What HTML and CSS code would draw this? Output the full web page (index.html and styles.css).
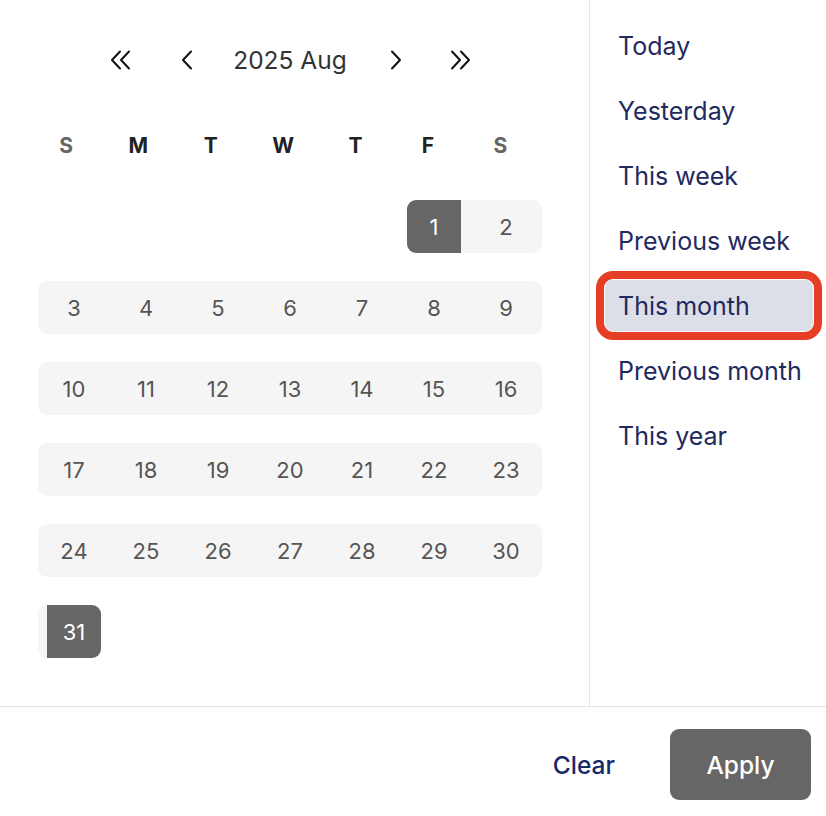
FILE: index.html
```html
<!DOCTYPE html>
<html>
<head>
<meta charset="utf-8">
<link rel="stylesheet" href="styles.css">
</head>
<body>
<div class="picker">
  <div class="main">
    <div class="cal">
      <div class="nav">
        <span class="icon dbl prev2"><svg width="22" height="20" viewBox="0 0 22 20"><polyline points="10,1.5 2,10 10,18.5" /><polyline points="19,1.5 11,10 19,18.5" /></svg></span>
        <span class="icon prev"><svg width="12" height="20" viewBox="0 0 12 20"><polyline points="10,1.5 2,10 10,18.5" /></svg></span>
        <span class="title">2025 Aug</span>
        <span class="icon next"><svg width="12" height="20" viewBox="0 0 12 20"><polyline points="2,1.5 10,10 2,18.5" /></svg></span>
        <span class="icon dbl next2"><svg width="22" height="20" viewBox="0 0 22 20"><polyline points="3,1.5 11,10 3,18.5" /><polyline points="12,1.5 20,10 12,18.5" /></svg></span>
      </div>
      <div class="week head">
        <span class="wd we">S</span><span class="wd">M</span><span class="wd">T</span><span class="wd">W</span><span class="wd">T</span><span class="wd">F</span><span class="wd we">S</span>
      </div>
      <div class="week">
        <span class="day"></span><span class="day"></span><span class="day"></span><span class="day"></span><span class="day"></span>
        <span class="day start"><b>1</b></span><span class="day in last">2</span>
      </div>
      <div class="week">
        <span class="day in first">3</span><span class="day in">4</span><span class="day in">5</span><span class="day in">6</span><span class="day in">7</span><span class="day in">8</span><span class="day in last">9</span>
      </div>
      <div class="week">
        <span class="day in first">10</span><span class="day in">11</span><span class="day in">12</span><span class="day in">13</span><span class="day in">14</span><span class="day in">15</span><span class="day in last">16</span>
      </div>
      <div class="week">
        <span class="day in first">17</span><span class="day in">18</span><span class="day in">19</span><span class="day in">20</span><span class="day in">21</span><span class="day in">22</span><span class="day in last">23</span>
      </div>
      <div class="week">
        <span class="day in first">24</span><span class="day in">25</span><span class="day in">26</span><span class="day in">27</span><span class="day in">28</span><span class="day in">29</span><span class="day in last">30</span>
      </div>
      <div class="week">
        <span class="day end"><b>31</b></span>
      </div>
    </div>
    <ul class="presets">
      <li>Today</li>
      <li>Yesterday</li>
      <li>This week</li>
      <li>Previous week</li>
      <li class="active">This month</li>
      <li>Previous month</li>
      <li>This year</li>
    </ul>
  </div>
  <div class="footer">
    <button class="clear">Clear</button>
    <button class="apply">Apply</button>
  </div>
</div>
</body>
</html>
```
FILE: styles.css
```css
* { box-sizing: border-box; }
html, body { margin: 0; padding: 0; background: #fff; }
body { font-family: Inter, "Noto Sans", sans-serif; width: 826px; height: 816px; overflow: hidden; }

.picker { display: flex; flex-direction: column; height: 816px; }
.main { display: flex; height: 707px; border-bottom: 1px solid #e4e4e7; }

.cal { width: 590px; border-right: 1px solid #e4e4e7; padding: 36px 0 0 38px; }

.nav { width: 504px; display: flex; align-items: center; height: 48px; padding-left: 72px; }
.icon { display: flex; align-items: center; justify-content: center; }
.icon svg { fill: none; stroke: #111; stroke-width: 2; stroke-linecap: round; stroke-linejoin: round; }
.prev { margin-left: 49px; }
.title { width: 114px; margin-left: 40px; text-align: center; font-size: 24.5px; color: #333; white-space: nowrap; }
.next { margin-left: 43px; }
.next2 { margin-left: 47px; }

.week { display: flex; width: 504px; height: 53px; margin-bottom: 28px; }
.week.head { height: 46px; margin: 38px 0 32px -8.2px; align-items: center; width: 520px; }
.wd { width: 72.4px; flex: none; text-align: center; font-weight: 700; font-size: 21px; color: #222; }
.wd.we { color: #666; }

.day { width: 72px; height: 53px; display: flex; align-items: center; justify-content: center; font-size: 22px; color: #555; }
.day.in { background: #f5f5f5; }
.day.first { border-radius: 9px 0 0 9px; }
.day.last { border-radius: 0 9px 9px 0; }
.day b { font-weight: 400; width: 54px; height: 53px; display: flex; align-items: center; justify-content: center; background: #666; color: #fff; }
.day.start { background: linear-gradient(to right, transparent 50%, #f5f5f5 50%); }
.day.start b { border-radius: 9px 0 0 9px; }
.day.end { background: linear-gradient(to right, #f5f5f5 50%, transparent 50%); border-radius: 9px 0 0 9px; }
.day.end b { border-radius: 0 9px 9px 0; }

.presets { list-style: none; margin: 0; padding: 20px 13px 0 15px; flex: 1; display: flex; flex-direction: column; gap: 14px; }
.presets li { height: 51px; display: flex; align-items: center; padding-left: 13px; font-size: 25px; color: #1f2a5e; border-radius: 8px; white-space: nowrap; }
.presets li.active { background: #dcdee8; outline: 8px solid #e63e26; outline-offset: 1px; }

.footer { flex: 1; display: flex; align-items: center; justify-content: flex-end; padding: 6px 15px 0 0; gap: 55px; }
.footer button { font-family: Inter, "Noto Sans", sans-serif; border: none; cursor: pointer; }
.clear { background: none; font-size: 24.5px; font-weight: 500; color: #17286b; padding: 0; }
.apply { width: 141px; height: 71px; border-radius: 9px; background: #666; color: #fff; font-size: 24.5px; font-weight: 500; }
```
